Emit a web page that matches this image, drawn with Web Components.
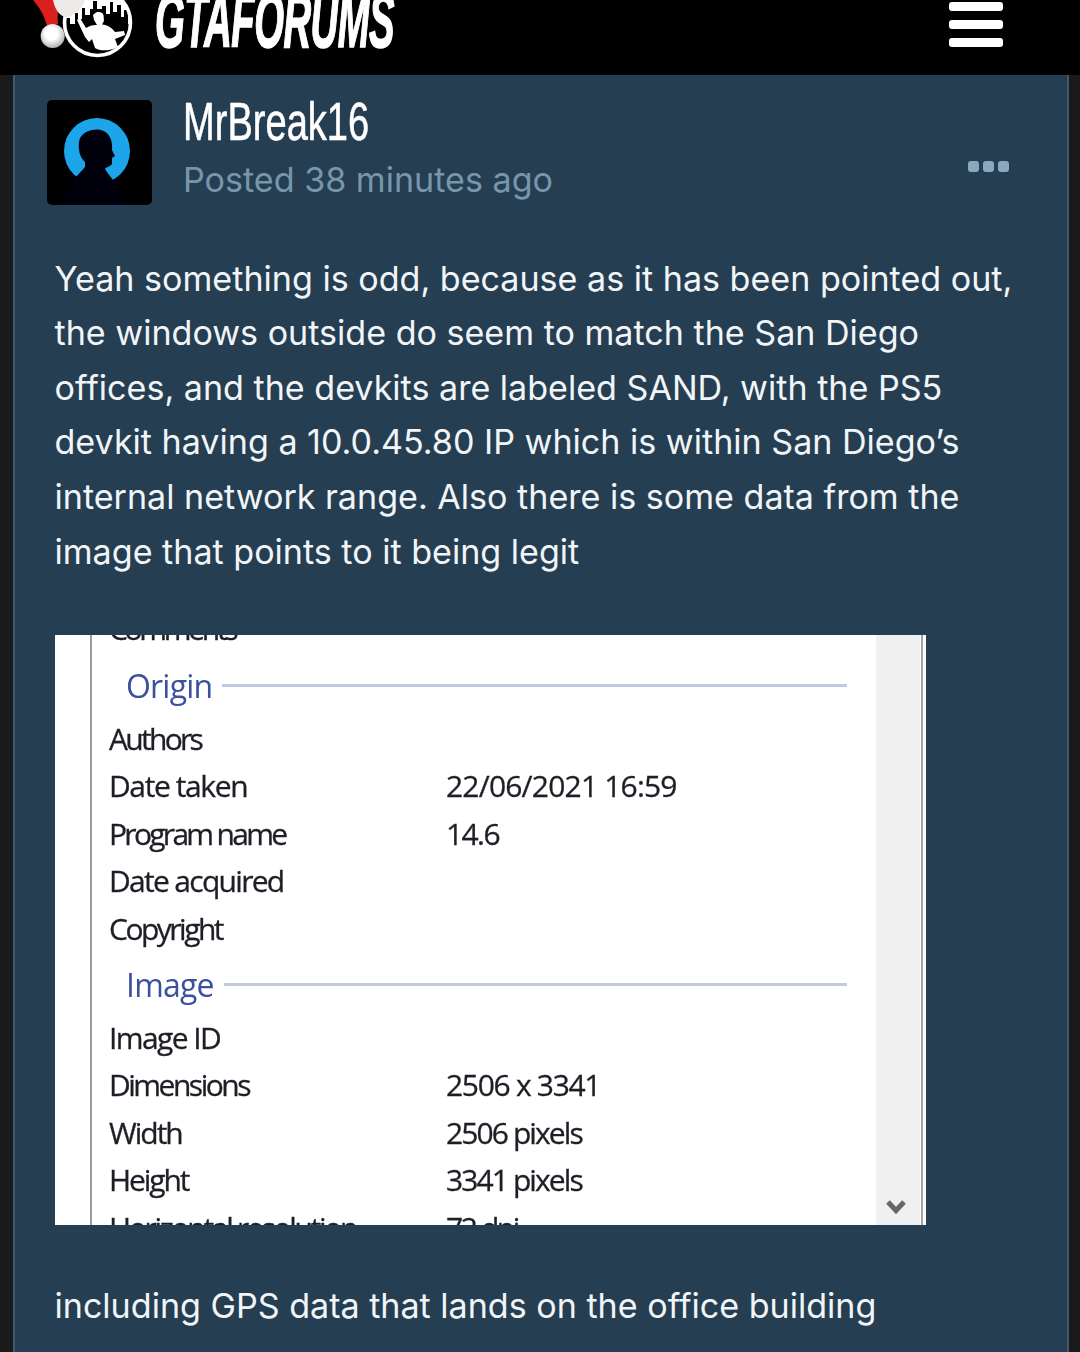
<!DOCTYPE html>
<html>
<head>
<meta charset="utf-8">
<title>GTAForums</title>
<style>
  html, body { margin: 0; height: 1352px; overflow: hidden; background: #1a1a1a; }
  body { font-family: Inter, "Liberation Sans", sans-serif; }
</style>
</head>
<body>
<gta-header></gta-header>
<post-card>
  <post-author name="MrBreak16" when="Posted 38 minutes ago"></post-author>
  <post-text>Yeah something is odd, because as it has been pointed out,<br>the windows outside do seem to match the San Diego<br>offices, and the devkits are labeled SAND, with the PS5<br>devkit having a 10.0.45.80 IP which is within San Diego’s<br>internal network range. Also there is some data from the<br>image that points to it being legit</post-text>
  <prop-sheet>
    <prop-row label="Comments" style="--lx:-3.3px"></prop-row>
    <prop-heading class="first">Origin</prop-heading>
    <prop-row label="Authors" style="--lx:-2.7px"></prop-row>
    <prop-row label="Date taken" value="22/06/2021 16:59" style="--lx:-1.4px;--vx:-0.8px"></prop-row>
    <prop-row label="Program name" value="14.6" style="--lx:-2.7px"></prop-row>
    <prop-row label="Date acquired" style="--lx:-1.7px"></prop-row>
    <prop-row label="Copyright" style="--lx:-2.5px"></prop-row>
    <prop-heading class="second">Image</prop-heading>
    <prop-row label="Image ID"></prop-row>
    <prop-row label="Dimensions" value="2506 x 3341" style="--lx:-2.5px;--vx:-1.3px"></prop-row>
    <prop-row label="Width" value="2506 pixels" style="--lx:-2px;--vx:-1.9px"></prop-row>
    <prop-row label="Height" value="3341 pixels" style="--lx:-2.1px;--vx:-1.9px"></prop-row>
    <prop-row label="Horizontal resolution" value="72 dpi" style="--lx:-2.3px;--vx:-2.4px"></prop-row>
  </prop-sheet>
  <post-text class="last">including GPS data that lands on the office building</post-text>
</post-card>

<script>
class GtaHeader extends HTMLElement {
  constructor() {
    super();
    this.attachShadow({ mode: "open" }).innerHTML = `
      <style>
        :host { display: flex; height: 75px; background: #000; overflow: hidden; align-items: flex-start; }
        svg { flex: none; display: block; margin-left: 30px; }
        .brand {
          flex: none; width: 238px; margin-left: 15px; height: 75px;
          color: #fff; font: italic bold 78px/66px "Liberation Sans", sans-serif;
          -webkit-text-stroke: 1.6px #fff;
          white-space: nowrap; transform-origin: 0 0; transform: scaleX(0.49);
          margin-top: -13px; letter-spacing: -1px;
        }
        .burger { margin-left: auto; margin-right: 77px; padding-top: 2px; display: flex; flex-direction: column; gap: 9px; }
        .burger i { display: block; width: 54px; height: 9px; border-radius: 3px; background: #fff; }
      </style>
      <svg width="110" height="75" viewBox="30 0 110 75">
        <defs>
          <radialGradient id="pom" cx="0.45" cy="0.4" r="0.65">
            <stop offset="0.4" stop-color="#fff"/><stop offset="1" stop-color="#a9a4a4"/>
          </radialGradient>
          <clipPath id="ring"><circle cx="97.5" cy="22.5" r="33"/></clipPath>
        </defs>
        <circle cx="97.5" cy="22.5" r="33" fill="#000"/>
        <g clip-path="url(#ring)">
          <path d="M60 -12 H136 V24 H128 V10 H124 V17 H121 V5 H117 V12 H113 V2 H110 V14 H106 V6 H102 V9 H97 V1 H93 V9 H90 V15 H85 V8 H82 V19 H78 V13 H75 V24 H70 V18 H60 Z" fill="#fff"/>
        </g>
        <circle cx="97.5" cy="22.5" r="33" fill="none" stroke="#fff" stroke-width="3.6"/>
        <path d="M93 15 L96 12.5 C99 11.5 103 12.5 103.5 15 L104 21 L102 24.5 C108 25 112 28 115 32 L124 31 L125 35 L115 39 L118 47 C110 51 100 51.5 95 48 L92 39 L89 42 L85 37 L77 20 L80 18 L86 28 L90 26 C92 25 95 25 97 25 L94 20 Z" fill="#fff"/>
        <path d="M33 0 H60 C58 8 57 16 58 24 L47 26 C44 15 40 8 33 0 Z" fill="#d9201f"/>
        <path d="M53 0 H85 C83 8 76 15 67 17 C60 17 55 10 53 0 Z" fill="#eeeaea"/>
        <circle cx="52.7" cy="36" r="12" fill="url(#pom)"/>
      </svg>
      <div class="brand">GTAFORUMS</div>
      <div class="burger"><i></i><i></i><i></i></div>`;
  }
}

class PostCard extends HTMLElement {
  constructor() {
    super();
    this.attachShadow({ mode: "open" }).innerHTML = `
      <style>
        :host {
          display: block; box-sizing: border-box; width: 1056px; height: 1277px; margin-left: 13px;
          background: #253e52; border: solid #3f5a6e; border-width: 0 2px;
          padding: 25px 0 0 40px; color: #f1f5f8;
        }
      </style>
      <slot></slot>`;
  }
}

class PostAuthor extends HTMLElement {
  constructor() {
    super();
    this.attachShadow({ mode: "open" }).innerHTML = `
      <style>
        :host { display: flex; align-items: flex-start; margin-left: -8px; height: 105px; margin-right: 58px; }
        .avatar { flex: none; width: 105px; height: 105px; border-radius: 5px; background: #000; display: block; }
        .who { margin-left: 31px; min-width: 0; }
        .name {
          height: 54px; color: #fff; white-space: nowrap; margin-top: -2px;
          font: 54px/46px "Liberation Sans", sans-serif; -webkit-text-stroke: 0.6px #fff;
          transform-origin: 0 0; transform: scaleX(0.705);
        }
        .when { margin-top: 6px; font-size: 34.1px; line-height: 44px; color: #7796ac; white-space: nowrap; }
        .more { margin-left: auto; margin-top: 61px; display: flex; gap: 4px; }
        .more i { display: block; width: 11px; height: 11px; border-radius: 3px; background: #8aa8bd; }
      </style>
      <svg class="avatar" viewBox="0 0 105 105">
        <defs><filter id="soft" x="-20%" y="-20%" width="140%" height="140%"><feGaussianBlur stdDeviation="0.7"/></filter></defs>
        <g filter="url(#soft)">
          <circle cx="50" cy="51" r="33" fill="#1fa5ea"/>
          <path d="M32 42 C33 32 46 28 54 30 C62 32 66 40 65 50 L68 56 L65 58 L65 64 C63 67 59 67 58 69 L60 72 L69 84 L80 105 H15 L27 79 L38 67 L38 62 C33 58 31 50 32 42 Z" fill="#02060c"/>
        </g>
      </svg>
      <div class="who">
        <div class="name"></div>
        <div class="when"></div>
      </div>
      <div class="more"><i></i><i></i><i></i></div>`;
  }
  connectedCallback() {
    this.shadowRoot.querySelector(".name").textContent = this.getAttribute("name");
    this.shadowRoot.querySelector(".when").textContent = this.getAttribute("when");
  }
}

class PostText extends HTMLElement {
  constructor() {
    super();
    this.attachShadow({ mode: "open" }).innerHTML = `
      <style>
        :host { display: block; font-size: 34.1px; line-height: 54.6px; white-space: nowrap; margin: 46.6px 0 0 -0.5px; color: #f1f5f8; }
        :host(.last) { margin-top: 54px; }
      </style>
      <slot></slot>`;
  }
}

class PropSheet extends HTMLElement {
  constructor() {
    super();
    this.attachShadow({ mode: "open" }).innerHTML = `
      <style>
        :host { display: flex; width: 871px; height: 590px; margin-top: 55.8px; background: #fff; overflow: hidden; }
        .list { flex: 1; min-width: 0; margin-left: 35px; border-left: 2px solid #9a9aa2; padding-left: 17px; overflow: hidden; filter: blur(0.7px); }
        .track { flex: none; width: 44px; background: #f0f0f0; display: flex; flex-direction: column; justify-content: flex-end; align-items: center; padding: 0 4px 9px 0; box-sizing: border-box; }
        .edge { flex: none; width: 6px; box-sizing: border-box; border-left: 1px solid #fff; border-right: 3px solid #fff; background: #a3a3a6; }
        .inner { margin-top: -30px; }
      </style>
      <div class="list"><div class="inner"><slot></slot></div></div>
      <div class="track">
        <svg width="20" height="17" viewBox="0 0 20 17"><path d="M2 3 L10 11.5 L18 3" fill="none" stroke="#666" stroke-width="5"/></svg>
      </div>
      <div class="edge"></div>`;
  }
}

class PropRow extends HTMLElement {
  constructor() {
    super();
    this.attachShadow({ mode: "open" }).innerHTML = `
      <style>
        :host {
          display: grid; grid-template-columns: 337px 1fr; height: 47.4px; align-items: center;
          font: 30px/40px "Open Sans", sans-serif; color: #1e1e26; white-space: nowrap;
          -webkit-text-stroke: 0.3px #1e1e26;
        }
        .label { letter-spacing: var(--lx, -1.6px); }
        .value { letter-spacing: var(--vx, -1.6px); }
      </style>
      <span class="label"></span><span class="value"></span>`;
  }
  connectedCallback() {
    this.shadowRoot.querySelector(".label").textContent = this.getAttribute("label");
    this.shadowRoot.querySelector(".value").textContent = this.getAttribute("value") || "";
  }
}

class PropHeading extends HTMLElement {
  constructor() {
    super();
    this.attachShadow({ mode: "open" }).innerHTML = `
      <style>
        :host {
          display: flex; align-items: center; height: 59px; padding-left: 17px; margin-right: 29px;
          font: 32px/40px "Open Sans", sans-serif; color: #3b519e; letter-spacing: -0.8px;
        }
        :host(.first) { margin-top: 4px; }
        :host(.second) { margin-top: 3px; }
        .rule { flex: 1; height: 3px; margin-left: 10px; background: #c2c9e0; }
      </style>
      <slot></slot><div class="rule"></div>`;
  }
}

customElements.define("gta-header", GtaHeader);
customElements.define("post-card", PostCard);
customElements.define("post-author", PostAuthor);
customElements.define("post-text", PostText);
customElements.define("prop-sheet", PropSheet);
customElements.define("prop-row", PropRow);
customElements.define("prop-heading", PropHeading);
</script>
</body>
</html>
